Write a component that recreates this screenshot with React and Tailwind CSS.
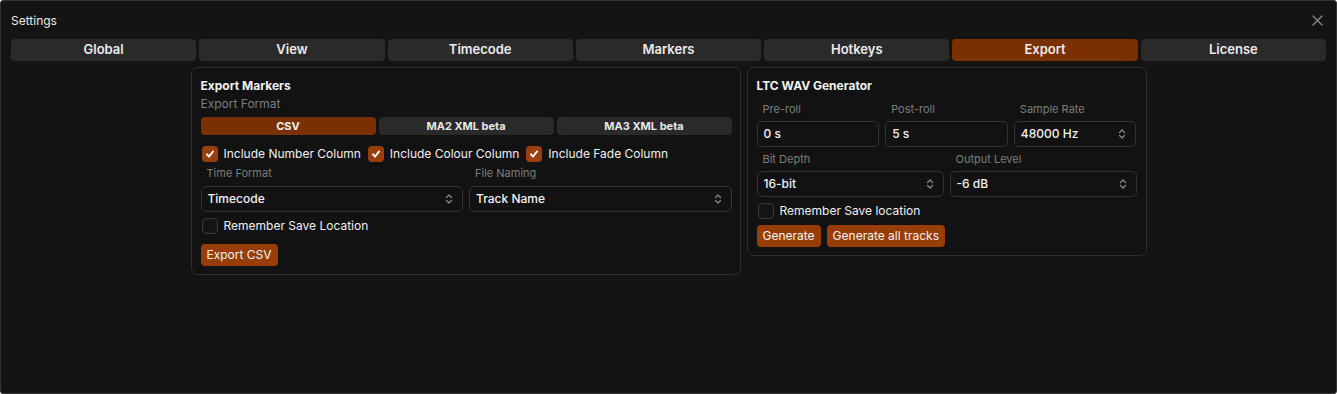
import React from "react";

const font = { fontFamily: "Inter, 'Noto Sans', sans-serif" };

function Chevrons() {
  return (
    <svg width="8" height="12" viewBox="0 0 8 12" fill="none" stroke="#8a8a8a" strokeWidth="1.2" strokeLinecap="round" strokeLinejoin="round">
      <path d="M1.5 4.5 L4 2 L6.5 4.5" />
      <path d="M1.5 7.5 L4 10 L6.5 7.5" />
    </svg>
  );
}

function Check({ checked }) {
  if (!checked)
    return <span className="w-[16px] h-[16px] rounded-[4px] border border-[#3a3a3a] bg-[#151515] shrink-0" />;
  return (
    <span className="w-[16px] h-[16px] rounded-[4px] bg-[#9a3e0b] flex items-center justify-center shrink-0">
      <svg width="10" height="10" viewBox="0 0 10 10" fill="none" stroke="white" strokeWidth="2" strokeLinecap="round" strokeLinejoin="round">
        <path d="M2 5.4 L4.1 7.5 L8 2.5" />
      </svg>
    </span>
  );
}

function Select({ value, className }) {
  return (
    <div className={"h-[26px] rounded-[5px] border border-[#333] bg-[#121212] flex items-center justify-between pl-[6px] pr-[9px] " + (className || "")}>
      <span className="text-[12px] font-medium text-[#f2f2f2]">{value}</span>
      <Chevrons />
    </div>
  );
}

function Input({ value }) {
  return (
    <div className="h-[26px] rounded-[5px] border border-[#333] bg-[#121212] flex items-center pl-[6px]">
      <span className="text-[12px] font-medium text-[#f2f2f2]">{value}</span>
    </div>
  );
}

export default function App() {
  const tabs = ["Global", "View", "Timecode", "Markers", "Hotkeys", "Export", "License"];
  return (
    <div style={font} className="w-[1337px] h-[394px] bg-[#141414] border border-[#343434] rounded-[3px] text-white overflow-hidden">
      <div className="flex items-center justify-between h-[38px] pl-[10px] pr-[13px] pt-[1px]">
        <span className="text-[12px] text-[#e8e8e8]">Settings</span>
        <svg width="11" height="11" viewBox="0 0 11 11" stroke="#8d8d8d" strokeWidth="1.3" strokeLinecap="round">
          <path d="M1 1 L10 10 M10 1 L1 10" />
        </svg>
      </div>
      <div className="flex gap-[3px] px-[10px]">
        {tabs.map((t) => (
          <div
            key={t}
            className={
              "flex-1 h-[22px] rounded-[4px] flex items-center justify-center text-[13px] font-semibold text-[#ececec] " +
              (t === "Export" ? "bg-[#7a3000]" : "bg-[#2a2a2a]")
            }
          >
            {t}
          </div>
        ))}
      </div>
      <div className="flex justify-center items-start gap-[6px] mt-[6px]">
        {/* Left card */}
        <div className="w-[550px] border border-[#2f2f2f] rounded-[7px] bg-[#121212] pl-[9px] pr-[8px] pt-[10px] pb-[8px]">
          <div className="text-[12px] font-bold text-[#f2f2f2] leading-[15px]">Export Markers</div>
          <div className="text-[12px] text-[#7d7d7d] leading-[15px] mt-[3px]">Export Format</div>
          <div className="flex gap-[3px] mt-[6px]">
            <div className="flex-1 h-[18px] rounded-[4px] bg-[#7a3000] flex items-center justify-center text-[11px] font-bold text-[#f0f0f0]">CSV</div>
            <div className="flex-1 h-[18px] rounded-[4px] bg-[#2a2a2a] flex items-center justify-center text-[11px] font-bold text-[#e8e8e8]">MA2 XML beta</div>
            <div className="flex-1 h-[18px] rounded-[4px] bg-[#2a2a2a] flex items-center justify-center text-[11px] font-bold text-[#e8e8e8]">MA3 XML beta</div>
          </div>
          <div className="flex items-center mt-[11px] h-[16px] pl-[1px]">
            <Check checked />
            <span className="ml-[6px] text-[12px] text-[#f0f0f0]">Include Number Column</span>
            <span className="ml-[7px]"><Check checked /></span>
            <span className="ml-[6px] text-[12px] text-[#f0f0f0]">Include Colour Column</span>
            <span className="ml-[7px]"><Check checked /></span>
            <span className="ml-[6px] text-[12px] text-[#f0f0f0]">Include Fade Column</span>
          </div>
          <div className="flex gap-[6px] mt-[4px]">
            <div className="flex-1">
              <div className="text-[11px] text-[#7d7d7d] pl-[6px] leading-[14px] mb-[6px]">Time Format</div>
              <Select value="Timecode" />
            </div>
            <div className="flex-1">
              <div className="text-[11px] text-[#7d7d7d] pl-[6px] leading-[14px] mb-[6px]">File Naming</div>
              <Select value="Track Name" />
            </div>
          </div>
          <div className="flex items-center mt-[6px] h-[16px] pl-[1px]">
            <Check />
            <span className="ml-[6px] text-[12px] text-[#f0f0f0]">Remember Save Location</span>
          </div>
          <div className="mt-[10px] flex">
            <div className="h-[22px] px-[6px] rounded-[4px] bg-[#983d06] flex items-center text-[12px] text-[#f2f2f2]">Export CSV</div>
          </div>
        </div>
        {/* Right card */}
        <div className="w-[400px] border border-[#2f2f2f] rounded-[7px] bg-[#121212] pl-[9px] pr-[9px] pt-[10px] pb-[8px]">
          <div className="text-[12px] font-bold text-[#f2f2f2] leading-[15px]">LTC WAV Generator</div>
          <div className="grid grid-cols-3 gap-x-[6px] mt-[9px]">
            {[["Pre-roll", "0 s"], ["Post-roll", "5 s"], ["Sample Rate", "48000 Hz"]].map(([l, v], i) => (
              <div key={l}>
                <div className="text-[11px] text-[#7d7d7d] pl-[6px] leading-[14px] mb-[5px]">{l}</div>
                {i === 2 ? <Select value={v} /> : <Input value={v} />}
              </div>
            ))}
          </div>
          <div className="grid grid-cols-2 gap-x-[6px] mt-[5px]">
            {[["Bit Depth", "16-bit"], ["Output Level", "-6 dB"]].map(([l, v]) => (
              <div key={l}>
                <div className="text-[11px] text-[#7d7d7d] pl-[6px] leading-[14px] mb-[5px]">{l}</div>
                <Select value={v} />
              </div>
            ))}
          </div>
          <div className="flex items-center mt-[6px] h-[16px] pl-[1px]">
            <Check />
            <span className="ml-[6px] text-[12px] text-[#f0f0f0]">Remember Save location</span>
          </div>
          <div className="mt-[6px] flex gap-[6px]">
            <div className="h-[22px] px-[6px] rounded-[4px] bg-[#983d06] flex items-center text-[12px] text-[#f2f2f2]">Generate</div>
            <div className="h-[22px] px-[6px] rounded-[4px] bg-[#983d06] flex items-center text-[12px] text-[#f2f2f2]">Generate all tracks</div>
          </div>
        </div>
      </div>
    </div>
  );
}
